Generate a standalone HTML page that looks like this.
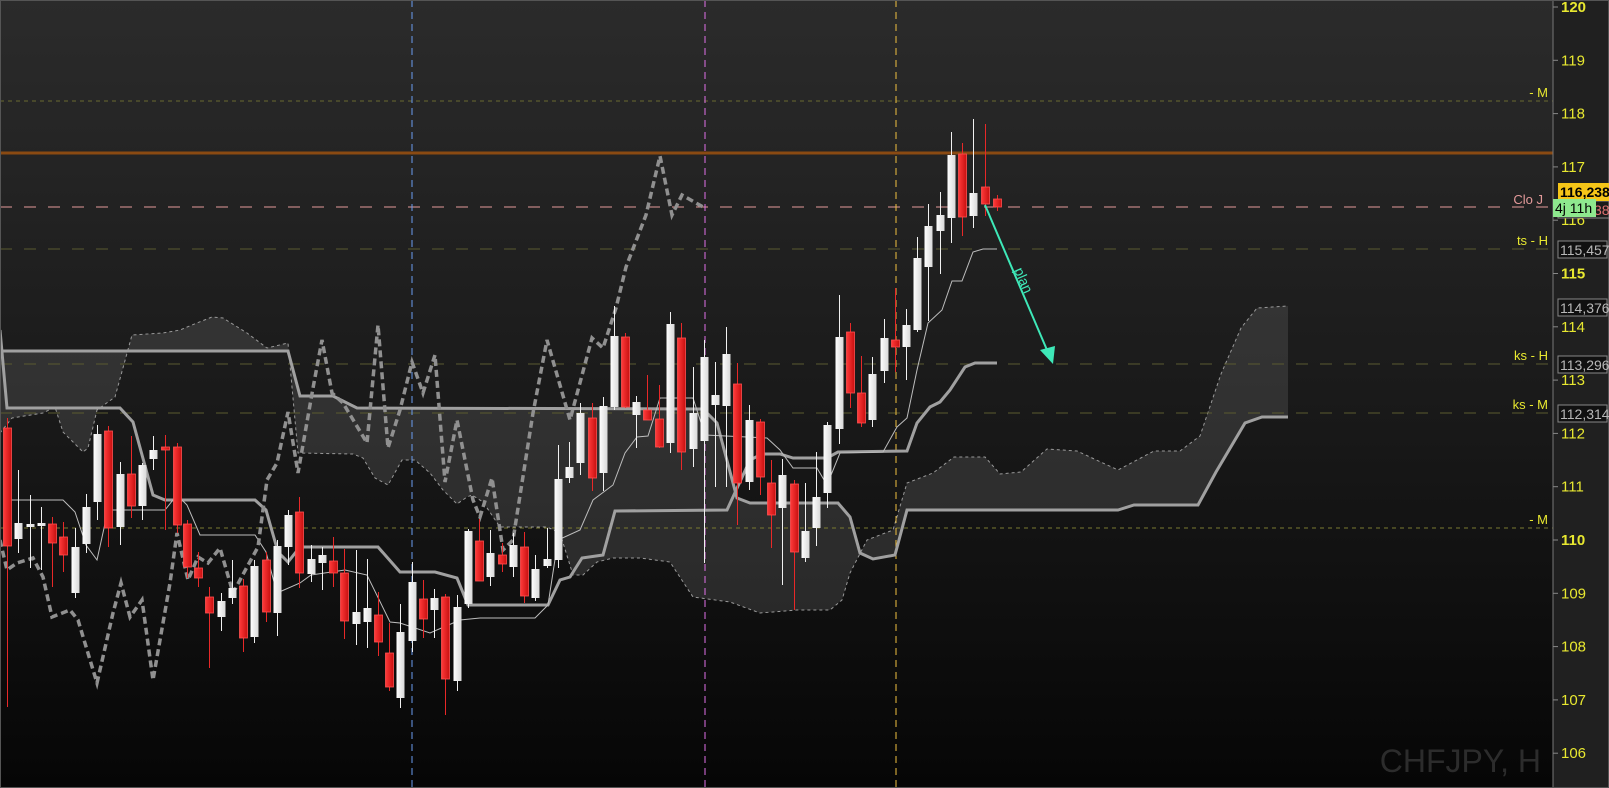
<!DOCTYPE html>
<html><head><meta charset="utf-8"><style>
html,body{margin:0;padding:0;background:#000;}
svg{display:block;font-family:"Liberation Sans",sans-serif;}
</style></head><body>
<svg id="s" width="1609" height="788" viewBox="0 0 1609 788" xmlns="http://www.w3.org/2000/svg">
<defs>
<linearGradient id="bg" x1="0" y1="0" x2="0" y2="1">
<stop offset="0" stop-color="#2b2b2b"/><stop offset="0.5" stop-color="#1a1a1a"/><stop offset="1" stop-color="#060606"/>
</linearGradient>
<linearGradient id="rd" x1="0" y1="0" x2="1" y2="0">
<stop offset="0" stop-color="#ff3a3a"/><stop offset="1" stop-color="#c81010"/>
</linearGradient>
<linearGradient id="wt" x1="0" y1="0" x2="1" y2="0">
<stop offset="0" stop-color="#ffffff"/><stop offset="1" stop-color="#d8d8d8"/>
</linearGradient>
</defs>
<rect width="1609" height="788" fill="url(#bg)"/>
<rect x="1553" y="0" width="56" height="788" fill="#202020"/>
<g id="cloud"></g>
<line x1="0" y1="101" x2="1553" y2="101" stroke="#6a6a30" stroke-dasharray="4 4"/>
<line x1="0" y1="153" x2="1553" y2="153" stroke="#8a4a12" stroke-width="3"/>
<line x1="0" y1="207" x2="1553" y2="207" stroke="#e49a9a" stroke-dasharray="12 12"/>
<line x1="0" y1="249" x2="1553" y2="249" stroke="#5a5a30" stroke-dasharray="12 12"/>
<line x1="0" y1="364" x2="1553" y2="364" stroke="#5a5a30" stroke-dasharray="12 12"/>
<line x1="0" y1="413" x2="1553" y2="413" stroke="#5a5a30" stroke-dasharray="12 12"/>
<line x1="0" y1="528" x2="1553" y2="528" stroke="#7a7a30" stroke-dasharray="4 4"/>
<line x1="412" y1="0" x2="412" y2="788" stroke="#6a9cf0" stroke-dasharray="7 5"/>
<line x1="705" y1="0" x2="705" y2="788" stroke="#e070e8" stroke-dasharray="7 5"/>
<line x1="896" y1="0" x2="896" y2="788" stroke="#f0c040" stroke-dasharray="7 5"/>
<g id="lines"></g>
<g id="candles"></g>
<line x1="985" y1="205" x2="1047" y2="350" stroke="#3ee8b8" stroke-width="2"/>
<polygon points="1053,364 1040,350 1055,346" fill="#3ee8b8"/>
<text x="0" y="0" transform="translate(1014,270) rotate(66.7)" fill="#3ee8b8" font-size="14">plan</text>
<g fill="#e8e830" font-size="13" text-anchor="end">
<text x="1548" y="97">- M</text>
<text x="1548" y="245">ts - H</text>
<text x="1548" y="360">ks - H</text>
<text x="1548" y="409">ks - M</text>
<text x="1548" y="524">- M</text>
</g>
<text x="1543" y="204" fill="#e49a9a" font-size="13" text-anchor="end">Clo J</text>
<line x1="1553" y1="0" x2="1553" y2="788" stroke="#777"/>
<rect x="0.5" y="0.5" width="1608" height="787" fill="none" stroke="#555"/>
<g id="axis" fill="#e8e830" font-size="15"></g>
<g font-size="14" fill="#b8b8b8">
<rect x="1558" y="241" width="49" height="17" fill="#111" stroke="#888"/><text x="1560" y="255">115,457</text>
<rect x="1558" y="299" width="49" height="17" fill="#111" stroke="#888"/><text x="1560" y="313">114,376</text>
<rect x="1558" y="356" width="49" height="17" fill="#111" stroke="#888"/><text x="1560" y="370">113,296</text>
<rect x="1558" y="405" width="49" height="17" fill="#111" stroke="#888"/><text x="1560" y="419">112,314</text>
</g>
<rect x="1558" y="201" width="51" height="17" fill="#1a1a1a" stroke="#888"/>
<text x="1560" y="215" fill="#e07070" font-size="14">116,238</text>
<rect x="1558" y="183" width="51" height="18" fill="#f5c518"/>
<text x="1560" y="197" fill="#000" font-size="14" font-weight="bold">116,238</text>
<rect x="1553" y="199" width="43" height="18" fill="#8ee88e"/>
<text x="1555" y="213" fill="#000" font-size="14">4j 11h</text>
<text x="1541" y="772" fill="#2c2c2c" font-size="32" text-anchor="end">CHFJPY, H</text>
</svg>
<script>
var NS="http://www.w3.org/2000/svg";
function el(p,t,a){var e=document.createElementNS(NS,t);for(var k in a)e.setAttribute(k,a[k]);p.appendChild(e);return e;}
function pts(a){return a.map(function(p){return p[0]+","+p[1]}).join(" ");}
var A=[[0,433],[12,418],[43,413],[55,407],[63,432],[83,452],[88,448],[97,410],[115,397],[132,335],[163,333],[180,330],[192,325],[212,317],[223,318],[247,333],[267,348],[288,343],[298,453],[353,454],[363,458],[375,478],[388,485],[402,460],[415,460],[430,473],[443,490],[457,504],[467,497],[472,495],[483,502],[500,527],[547,527],[560,533],[573,575],[583,575],[597,562],[613,558],[640,558],[670,562],[693,597],[730,602],[760,613],[797,610],[830,610],[842,600],[850,573],[867,540],[893,530],[907,483],[920,478],[933,473],[954,457],[985,457],[1000,474],[1021,472],[1047,449],[1077,451],[1118,470],[1154,451],[1180,451],[1200,436],[1221,374],[1241,328],[1257,308],[1288,306]];
var B=[[0,351],[288,351],[300,396],[333,396],[357,408],[703,409],[717,423],[737,498],[750,503],[838,503],[850,517],[860,553],[873,559],[895,555],[907,510],[1118,510],[1134,505],[1198,505],[1216,472],[1245,423],[1262,417],[1288,417]];
var cg=document.getElementById("cloud");
el(cg,"polygon",{points:pts(A.concat(B.slice().reverse())),fill:"rgba(110,110,110,0.28)"});
el(cg,"polyline",{points:pts(A),fill:"none",stroke:"#9a9a9a","stroke-dasharray":"3 3","stroke-width":1});
var lg=document.getElementById("lines");
el(lg,"polyline",{points:pts(B),fill:"none",stroke:"#a0a0a0","stroke-width":3});
var K=[[0,330],[7,408],[120,408],[133,422],[153,495],[165,500],[255,500],[266,510],[278,552],[288,562],[300,547],[378,547],[400,572],[435,572],[457,578],[468,605],[548,605],[560,580],[570,577],[582,558],[603,555],[615,511],[727,510],[750,460],[762,454],[780,454],[793,458],[827,458],[838,452],[907,451],[917,423],[930,407],[940,402],[950,390],[965,367],[975,363],[997,363]];
el(lg,"polyline",{points:pts(K),fill:"none",stroke:"#a0a0a0","stroke-width":3});
var T=[[7,500],[63,500],[75,512],[86,545],[97,560],[108,510],[165,510],[177,495],[187,505],[200,535],[255,535],[266,552],[277,593],[300,583],[311,575],[345,570],[367,575],[390,622],[400,623],[430,633],[460,620],[480,618],[535,618],[548,605],[558,540],[580,530],[593,500],[613,485],[625,453],[637,437],[648,436],[660,398],[693,398],[705,435],[767,438],[780,450],[793,468],[817,468],[827,485],[840,453],[883,452],[897,427],[907,418],[917,370],[928,323],[942,310],[952,281],[962,281],[973,252],[983,249],[997,249]];
el(lg,"polyline",{points:pts(T),fill:"none",stroke:"#bdbdbd","stroke-width":1});
var C=[[0,540],[7,570],[17,563],[33,558],[43,577],[52,617],[70,610],[78,620],[97,683],[113,613],[121,583],[130,617],[142,600],[153,680],[170,583],[177,533],[188,580],[198,557],[208,563],[220,548],[233,593],[247,567],[258,547],[267,480],[277,463],[288,412],[298,473],[313,388],[322,340],[332,393],[343,403],[367,443],[378,325],[388,448],[400,410],[412,362],[423,393],[435,355],[445,482],[457,420],[473,500],[480,517],[492,478],[503,550],[513,540],[533,413],[547,340],[570,420],[592,338],[603,348],[616,308],[626,267],[646,215],[660,156],[672,215],[682,195],[703,207]];
el(lg,"polyline",{points:pts(C),fill:"none",stroke:"#909090","stroke-width":3.5,"stroke-dasharray":"7 4"});
var D=[[7,428,546,418,707,0],[18,523,539,470,553,1],[30,524,527,495,568,1],[41,523,526,507,570,1],[52,524,543,517,587,0],[63,537,555,522,572,0],[75,547,593,528,598,1],[86,507,544,494,553,1],[97,434,502,425,520,1],[108,431,528,426,547,0],[120,474,527,462,545,1],[131,474,506,436,518,0],[142,465,506,463,520,1],[153,450,459,436,470,1],[165,447,450,435,530,0],[177,447,525,443,533,0],[187,524,567,520,578,0],[198,568,578,552,587,0],[209,597,613,587,668,0],[221,601,617,593,631,1],[232,588,598,560,604,1],[243,586,638,579,652,0],[254,566,637,560,643,1],[266,560,612,552,622,0],[277,546,613,540,636,1],[288,515,547,510,565,1],[299,512,573,497,588,0],[311,559,574,545,582,1],[322,555,563,547,590,1],[333,561,573,537,587,0],[344,573,621,549,639,0],[356,612,624,550,645,1],[367,608,622,559,648,1],[378,615,642,592,656,0],[389,653,687,623,691,0],[400,632,698,604,708,1],[412,582,641,562,652,1],[423,599,619,580,638,0],[434,598,610,589,638,1],[445,597,679,594,715,0],[457,607,681,595,691,1],[468,531,604,529,608,1],[479,541,581,519,581,0],[490,553,577,530,586,1],[502,555,564,543,572,0],[513,545,567,533,577,1],[524,547,596,532,603,0],[535,569,598,555,601,1],[547,559,566,528,568,1],[558,479,560,445,568,1],[569,467,478,442,483,1],[580,413,463,403,475,1],[592,418,478,403,491,0],[603,406,473,397,491,1],[614,336,407,306,410,1],[625,337,407,333,408,0],[636,402,415,396,448,1],[647,410,420,375,420,0],[659,419,447,385,448,0],[670,324,443,312,453,1],[681,338,452,323,470,0],[693,413,449,367,467,1],[704,357,441,340,563,1],[715,395,405,362,487,1],[726,354,406,327,487,1],[737,384,483,363,525,0],[749,420,482,405,490,1],[760,422,477,419,495,0],[771,483,515,460,548,0],[782,475,508,459,585,1],[794,484,552,480,610,0],[805,531,558,483,562,1],[816,497,528,452,546,1],[827,425,493,422,508,1],[839,337,429,295,444,1],[850,332,393,323,408,0],[861,393,423,356,427,0],[872,374,420,357,427,1],[884,338,371,319,383,1],[895,340,347,288,372,0],[906,325,347,309,380,1],[917,258,330,237,332,1],[928,226,267,204,321,1],[940,215,231,192,274,1],[951,155,218,132,243,1],[962,154,217,143,236,0],[973,193,216,119,228,1],[985,187,204,124,216,0],[997,199,207,195,211,0]];
var g=document.getElementById("candles");
D.forEach(function(c){
var w=c[5]?"#f0f0f0":"#e82828";
el(g,"line",{x1:c[0]+0.5,y1:c[3],x2:c[0]+0.5,y2:c[4],stroke:w,"stroke-width":1});
var h=Math.max(c[2]-c[1],2);
el(g,"rect",{x:c[0]-3.5,y:c[1],width:8,height:h,fill:c[5]?"url(#wt)":"url(#rd)",stroke:c[5]?"none":"#ff5050","stroke-width":c[5]?0:0.8});
});
var ax=document.getElementById("axis");
for(var p=106;p<=120;p++){
var y=7+(120-p)*53.3;
el(ax,"line",{x1:1553,y1:y,x2:1558,y2:y,stroke:"#888"});
var t=el(ax,"text",{x:1561,y:y+5});
t.textContent=p;
if(p==120||p==115||p==110)t.setAttribute("font-weight","bold");
}
</script>
</body></html>
